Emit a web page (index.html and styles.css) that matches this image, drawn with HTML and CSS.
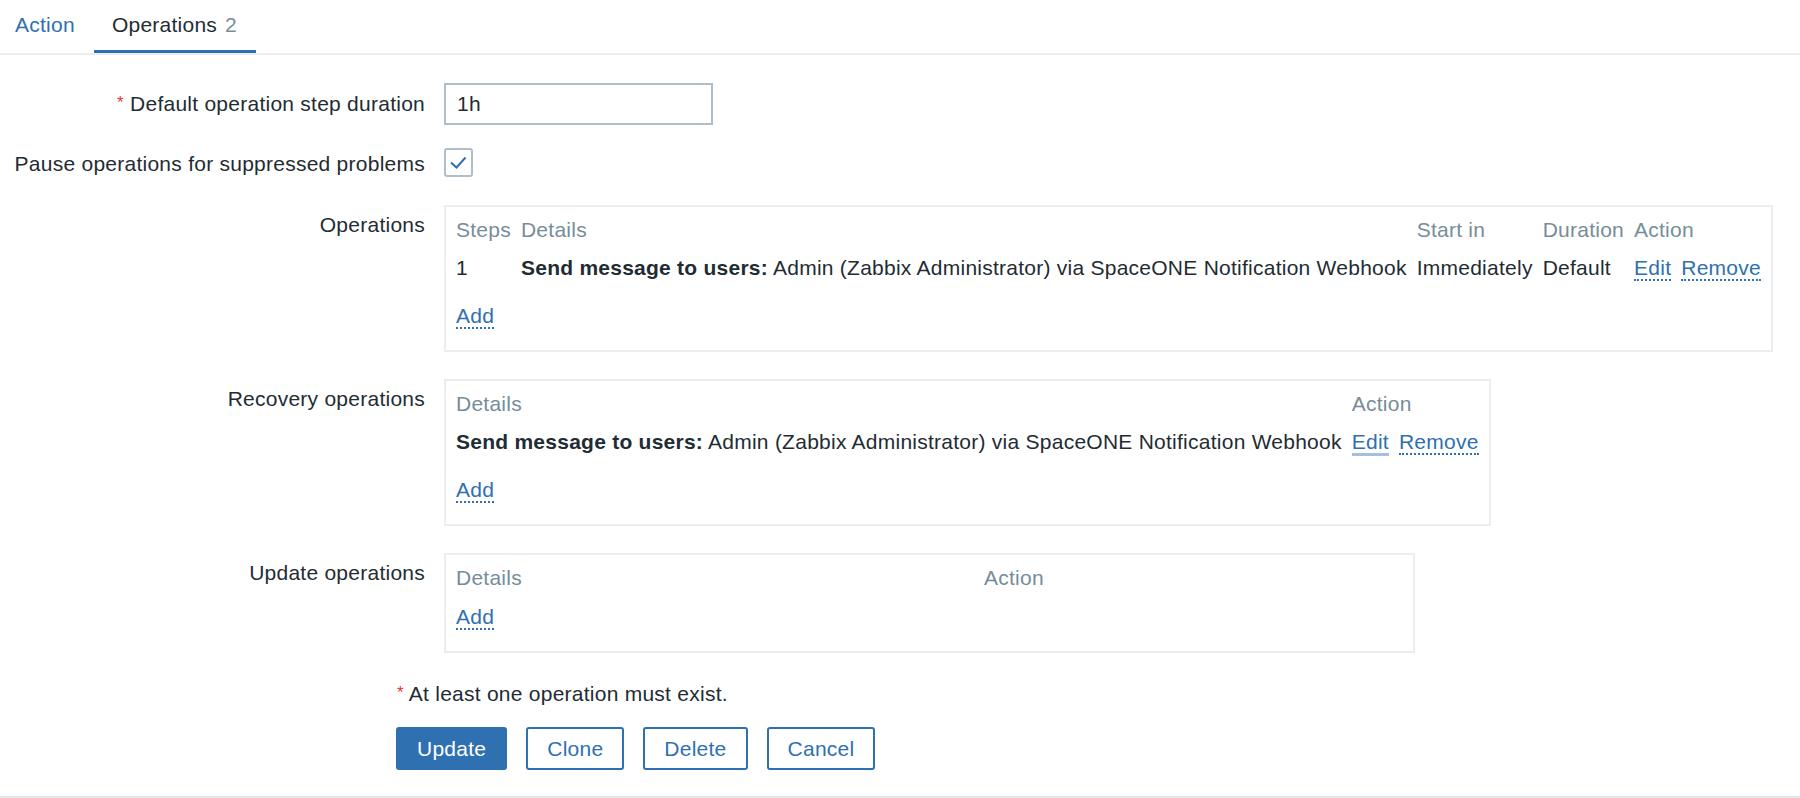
FILE: index.html
```html
<!DOCTYPE html>
<html lang="en">
<head>
<meta charset="utf-8">
<title>Action - Operations</title>
<link rel="stylesheet" href="styles.css">
</head>
<body>
<div class="page">
  <nav class="tabs">
    <a class="tab">Action</a>
    <a class="tab active">Operations<span class="count">2</span></a>
  </nav>

  <form class="form">
    <div class="form-grid">
      <label class="label"><span class="req">*</span> Default operation step duration</label>
      <div class="field"><input class="text-input" type="text" value="1h"></div>

      <label class="label label-check">Pause operations for suppressed problems</label>
      <div class="field field-check">
        <span class="checkbox">
          <svg width="25" height="25" viewBox="0 0 25 25"><polyline points="5,12.5 10.5,17.5 19.5,7.5" fill="none" stroke="#2f70b1" stroke-width="2"/></svg>
        </span>
      </div>

      <label class="label">Operations</label>
      <div class="field field-box">
        <div class="op-box">
          <table class="op-table">
            <thead>
              <tr><th>Steps</th><th>Details</th><th>Start in</th><th>Duration</th><th>Action</th></tr>
            </thead>
            <tbody>
              <tr class="data">
                <td>1</td>
                <td><b>Send message to users:</b> Admin (Zabbix Administrator) via SpaceONE Notification Webhook</td>
                <td>Immediately</td>
                <td>Default</td>
                <td><a class="link">Edit</a><a class="link">Remove</a></td>
              </tr>
            </tbody>
            <tfoot>
              <tr><td colspan="5"><a class="link">Add</a></td></tr>
            </tfoot>
          </table>
        </div>
      </div>

      <label class="label">Recovery operations</label>
      <div class="field field-box">
        <div class="op-box">
          <table class="op-table">
            <thead>
              <tr><th>Details</th><th>Action</th></tr>
            </thead>
            <tbody>
              <tr class="data">
                <td><b>Send message to users:</b> Admin (Zabbix Administrator) via SpaceONE Notification Webhook</td>
                <td><a class="link link-hover">Edit</a><a class="link">Remove</a></td>
              </tr>
            </tbody>
            <tfoot>
              <tr><td colspan="2"><a class="link">Add</a></td></tr>
            </tfoot>
          </table>
        </div>
      </div>

      <label class="label">Update operations</label>
      <div class="field field-box">
        <div class="op-box op-box-update">
          <table class="op-table op-table-full">
            <thead>
              <tr><th class="col-details">Details</th><th>Action</th></tr>
            </thead>
            <tfoot>
              <tr><td colspan="2"><a class="link">Add</a></td></tr>
            </tfoot>
          </table>
        </div>
      </div>
    </div>

    <div class="form-actions">
      <p class="note"><span class="req">*</span> At least one operation must exist.</p>
      <div class="buttons">
        <button type="button" class="btn btn-primary">Update</button>
        <button type="button" class="btn">Clone</button>
        <button type="button" class="btn">Delete</button>
        <button type="button" class="btn">Cancel</button>
      </div>
    </div>
  </form>
  <div class="page-bottom"></div>
</div>
</body>
</html>
```

FILE: styles.css
```css
html, body {
  margin: 0;
  padding: 0;
  background: #ffffff;
}

body {
  font-family: "Liberation Sans", Arial, sans-serif;
  font-size: 21px;
  line-height: 24px;
  letter-spacing: 0.25px;
  color: #1f2c33;
}

.page {
  width: 1800px;
  height: 798px;
  overflow: hidden;
}

/* Tabs */
.tabs {
  display: flex;
  margin-left: -3px;
  border-bottom: 2px solid #ebeef0;
}

.tab {
  display: block;
  padding: 13px 19px 13px 18px;
  border-bottom: 3px solid transparent;
  color: #2f70b1;
  text-decoration: none;
}

.tab.active {
  color: #1f2c33;
  border-bottom-color: #2f70b1;
}

.count {
  margin-left: 8px;
  color: #768d99;
}

/* Form */
.form {
  padding-top: 28px;
  margin: 0;
}

.form-grid {
  display: grid;
  grid-template-columns: 425px auto;
  column-gap: 19px;
  row-gap: 23px;
  justify-content: start;
}

.label {
  text-align: right;
  padding-top: 8px;
  white-space: nowrap;
}

.label-check {
  padding-top: 4px;
}

.req {
  color: #e33734;
  font-size: 17px;
  vertical-align: 3px;
}

.field {
  justify-self: start;
}

.field-check {
  padding-bottom: 5px;
}

.field-box {
  display: flex;
  align-items: flex-start;
  padding-bottom: 4px;
}

.text-input {
  box-sizing: border-box;
  width: 269px;
  height: 42px;
  margin: 0;
  padding: 0 11px;
  border: 2px solid #b1bec7;
  border-radius: 0;
  font-family: inherit;
  font-size: 21px;
  letter-spacing: 0.25px;
  color: #1f2c33;
  outline: none;
  display: block;
}

.checkbox {
  box-sizing: border-box;
  display: flex;
  align-items: center;
  justify-content: center;
  width: 29px;
  height: 29px;
  border: 2px solid #b1bec7;
  border-radius: 3px;
}

/* Operation boxes */
.op-box {
  display: block;
  border: 2px solid #ebeef0;
  padding: 4px 10px 22px;
}

.op-box-update {
  box-sizing: border-box;
  width: 971px;
}

.op-table {
  border-collapse: collapse;
  border-spacing: 0;
}

.op-table-full {
  width: 100%;
}

.op-table th,
.op-table td {
  padding: 7px 10px 7px 0;
  text-align: left;
  white-space: nowrap;
  vertical-align: top;
  font-weight: normal;
}

.op-table th {
  color: #768d99;
}

.op-table th:last-child,
.op-table td:last-child {
  padding-right: 0;
}

.op-table .col-details {
  width: 518px;
}

.op-table tr.data td {
  padding-bottom: 16px;
}

.op-table tfoot td {
  padding-top: 8px;
  padding-bottom: 0;
}

.op-table b {
  font-weight: bold;
}

.link {
  color: #2f70b1;
  text-decoration: none;
  border-bottom: 2px dotted #2f70b1;
  cursor: pointer;
}

.link + .link {
  margin-left: 10px;
}

.link-hover {
  border-bottom: 3px solid #a3c0dc;
}

/* Actions */
.form-actions {
  margin-left: 396px;
  margin-top: 24px;
}

.note {
  margin: 0;
}

.note .req {
  margin-left: 1px;
}

.buttons {
  display: flex;
  gap: 19px;
  margin-top: 21px;
}

.btn {
  box-sizing: border-box;
  height: 43px;
  margin: 0;
  padding: 0 19px;
  border: 2px solid #2f70b1;
  border-radius: 3px;
  background: #ffffff;
  color: #2f70b1;
  font-family: inherit;
  font-size: 21px;
  line-height: 24px;
  letter-spacing: 0.25px;
}

.btn-primary {
  background: #2f70b1;
  color: #ffffff;
}

.page-bottom {
  margin-top: 26px;
  height: 3px;
  background: #e3e7ea;
}
```
